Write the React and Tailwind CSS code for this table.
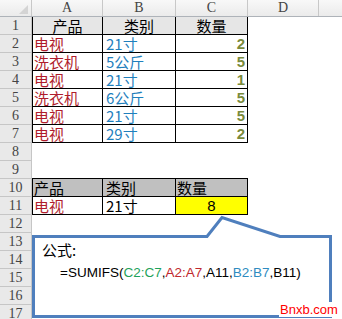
import React from "react";

const CJK = { fontFamily: '"Noto Sans CJK SC", "Liberation Sans", sans-serif' };

const data = [
  ["电视", "21寸", "2"],
  ["洗衣机", "5公斤", "5"],
  ["电视", "21寸", "1"],
  ["洗衣机", "6公斤", "5"],
  ["电视", "21寸", "5"],
  ["电视", "29寸", "2"],
];

function RowHead({ n }) {
  return (
    <div className="w-[32px] shrink-0 h-full bg-[#e9e9e9] border-r border-b border-[#c6c6c6] flex items-center justify-center text-[14px] leading-[16px] text-[#444]" style={{ fontFamily: '"Liberation Serif", serif' }}>
      {n}
    </div>
  );
}

function Row({ n, children }) {
  return (
    <div className="flex h-[18px] shrink-0 leading-[16px]">
      <RowHead n={n} />
      {children}
    </div>
  );
}

function EmptyTail() {
  return (
    <>
      <div className="w-[71px] shrink-0" />
      <div className="flex-1" />
    </>
  );
}

export default function App() {
  const rows = [];
  const header = (
    <div className="flex h-[17px] shrink-0 bg-gradient-to-b from-[#f8f8f8] to-[#ebebeb] border-b border-[#aeb3b9] text-[14px] leading-[16px] text-[#444]" style={{ fontFamily: '"Liberation Serif", serif' }}>
      <div className="w-[32px] shrink-0 border-r border-[#c8c8c8] relative">
        <div className="absolute right-[3px] bottom-[2px] w-0 h-0 border-l-[9px] border-l-transparent border-b-[9px] border-b-[#d4d4d4]" />
      </div>
      <div className="w-[71px] shrink-0 border-r border-[#c8c8c8] flex items-center justify-center">A</div>
      <div className="w-[73px] shrink-0 border-r border-[#c8c8c8] flex items-center justify-center">B</div>
      <div className="w-[72px] shrink-0 border-r border-[#c8c8c8] flex items-center justify-center">C</div>
      <div className="w-[71px] shrink-0 border-r border-[#c8c8c8] flex items-center justify-center">D</div>
      <div className="flex-1" />
    </div>
  );

  rows.push(
    <Row n={1} key={1}>
      <div className="w-[71px] shrink-0 bg-[#e6e6e6] border-l border-r border-b border-black flex items-center justify-center text-[15px] leading-[16px] text-black" style={CJK}>产品</div>
      <div className="w-[73px] shrink-0 bg-[#e6e6e6] border-r border-b border-black flex items-center justify-center text-[15px] leading-[16px] text-black" style={CJK}>类别</div>
      <div className="w-[72px] shrink-0 bg-[#e6e6e6] border-r border-b border-black flex items-center justify-center text-[15px] leading-[16px] text-black" style={CJK}>数量</div>
      <EmptyTail />
    </Row>
  );

  data.forEach((d, i) => {
    rows.push(
      <Row n={i + 2} key={i + 2}>
        <div className="w-[71px] shrink-0 border-l border-r border-b border-black flex items-center pl-[1px] text-[15px] leading-[16px] text-[#b01c2c]" style={CJK}>{d[0]}</div>
        <div className="w-[73px] shrink-0 border-r border-b border-black flex items-center pl-[3px] text-[15px] leading-[16px] text-[#1f80bd]" style={CJK}>{d[1]}</div>
        <div className="w-[72px] shrink-0 border-r border-b border-black flex items-center justify-end pr-[2px] text-[15px] leading-[16px] font-bold text-[#7a8b3c]" style={{ fontFamily: '"Liberation Sans", sans-serif' }}>{d[2]}</div>
        <EmptyTail />
      </Row>
    );
  });

  rows.push(
    <Row n={8} key={8}>
      <div className="w-[216px] shrink-0" />
      <EmptyTail />
    </Row>
  );
  rows.push(
    <Row n={9} key={9}>
      <div className="w-[216px] shrink-0 border-b border-black" />
      <EmptyTail />
    </Row>
  );
  rows.push(
    <Row n={10} key={10}>
      <div className="w-[71px] shrink-0 bg-[#c0c0c0] border-l border-r border-b border-black flex items-center pl-[1px] text-[15px] leading-[16px] text-black" style={CJK}>产品</div>
      <div className="w-[73px] shrink-0 bg-[#c0c0c0] border-r border-b border-black flex items-center pl-[3px] text-[15px] leading-[16px] text-black" style={CJK}>类别</div>
      <div className="w-[72px] shrink-0 bg-[#c0c0c0] border-r border-b border-black flex items-center pl-[1px] text-[15px] leading-[16px] text-black" style={CJK}>数量</div>
      <EmptyTail />
    </Row>
  );
  rows.push(
    <Row n={11} key={11}>
      <div className="w-[71px] shrink-0 border-l border-r border-b border-black flex items-center pl-[1px] text-[15px] leading-[16px] text-[#b01c2c]" style={CJK}>电视</div>
      <div className="w-[73px] shrink-0 border-r border-b border-black flex items-center pl-[3px] text-[15px] leading-[16px] text-black" style={CJK}>21寸</div>
      <div className="w-[72px] shrink-0 bg-[#ffff00] border-r border-b border-black flex items-center justify-center text-[15px] leading-[16px] text-black" style={{ fontFamily: '"Liberation Sans", sans-serif' }}>8</div>
      <EmptyTail />
    </Row>
  );
  for (let n = 12; n <= 17; n++) {
    rows.push(
      <Row n={n} key={n}>
        <div className="w-[216px] shrink-0" />
        <EmptyTail />
      </Row>
    );
  }

  return (
    <div className="relative w-[342px] h-[319px] overflow-hidden bg-white flex flex-col">
      {header}
      {rows}

      <svg className="absolute left-0 top-0" width="342" height="319" viewBox="0 0 342 319">
        <path
          d="M33.5,236.5 L207,236.5 L222,217.5 L280,236.5 L330.5,236.5 L330.5,316.5 L33.5,316.5 Z"
          fill="#ffffff"
          stroke="#4f7fbd"
          strokeWidth="3"
          strokeLinejoin="miter"
        />
      </svg>

      <div className="absolute left-[42px] top-[240px] text-[15px] text-black leading-[20px]" style={CJK}>
        公式:
      </div>
      <div className="absolute left-[60px] top-[264px] text-[13.5px] leading-[18px] text-black whitespace-nowrap" style={{ fontFamily: '"Liberation Sans", sans-serif' }}>
        =SUMIFS(<span className="text-[#1ea25a]">C2:C7</span>,<span className="text-[#c0282d]">A2:A7</span>,A11,<span className="text-[#2e8bc0]">B2:B7</span>,B11)
      </div>

      <div className="absolute left-[279px] top-[302px] bg-white px-[1px] text-[13px] leading-[15px] text-[#ff0000]" style={{ fontFamily: '"Liberation Sans", sans-serif' }}>
        Bnxb.com
      </div>
    </div>
  );
}
